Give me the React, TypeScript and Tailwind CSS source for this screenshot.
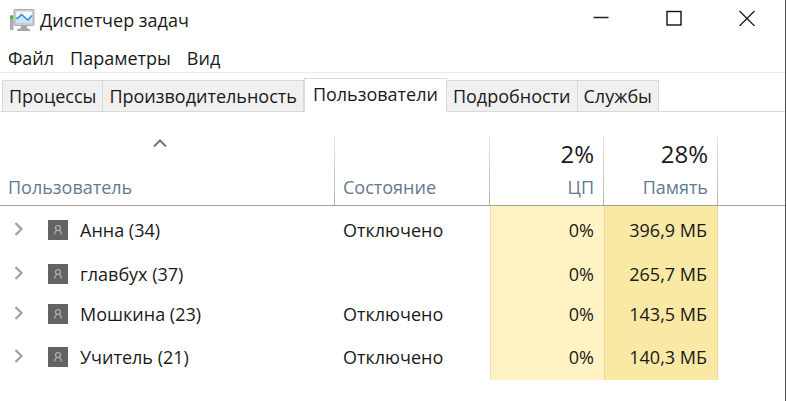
import { useState } from 'react'

type User = {
  name: string
  status: string
  cpu: string
  memory: string
  height: string
}

const menu = ['Файл', 'Параметры', 'Вид']

const tabs = ['Процессы', 'Производительность', 'Пользователи', 'Подробности', 'Службы']

const users: User[] = [
  { name: 'Анна (34)', status: 'Отключено', cpu: '0%', memory: '396,9 МБ', height: 'h-12' },
  { name: 'главбух (37)', status: '', cpu: '0%', memory: '265,7 МБ', height: 'h-10' },
  { name: 'Мошкина (23)', status: 'Отключено', cpu: '0%', memory: '143,5 МБ', height: 'h-10' },
  { name: 'Учитель (21)', status: 'Отключено', cpu: '0%', memory: '140,3 МБ', height: 'h-[46px]' },
]

// thin column divider that fades out towards the top
const divider =
  'bg-[linear-gradient(to_bottom,#e6e6e6,#b4b4b4)] bg-[length:1px_100%] bg-right bg-no-repeat'

function AppIcon() {
  return (
    <svg className="h-6 w-7 shrink-0" viewBox="0 0 28 24" aria-hidden="true">
      <rect x="2" y="7" width="3.500" height="15" fill="#a9adb0" />
      <rect x="2" y="8" width="3" height="3" fill="#2fc52f" />
      <path d="M13 17h6v3l3 1.500V23H9v-1.500l4-1.500z" fill="#a3a7ab" />
      <rect x="6" y="1.500" width="20" height="16" rx="1" fill="#c9cccf" stroke="#a9adb0" />
      <rect x="8" y="3.500" width="16" height="11.500" fill="#f1f9fe" />
      <path d="M8 11.500l2-.5 3.500-4 4 4 2.500 2 4-4v6H8z" fill="#c5e6fa" />
      <path
        d="M8 10.500l2-.5 3.500-3.500 4 3.500 2.500 2 4-4.500"
        fill="none"
        stroke="#3586cf"
        strokeWidth="1.500"
      />
    </svg>
  )
}

function UserIcon() {
  return (
    <svg className="h-5 w-5 shrink-0" viewBox="0 0 20 20" aria-hidden="true">
      <rect width="20" height="20" fill="#636363" />
      <circle cx="10" cy="8" r="2.500" fill="none" stroke="#b5b5b5" strokeWidth="1.200" />
      <path
        d="M6.500 14.500c0-2.500 1-3.500 2.500-4.300M13.500 14.500c0-2.500-1-3.500-2.500-4.300"
        fill="none"
        stroke="#b5b5b5"
        strokeWidth="1.200"
      />
    </svg>
  )
}

function WindowButtons() {
  return (
    <div className="flex pr-0.5">
      <button type="button" aria-label="Свернуть" className="flex h-9 w-[73px] items-center justify-center">
        <svg className="h-4 w-4" viewBox="0 0 16 16" fill="none" stroke="#222" strokeWidth="1.500">
          <path d="M0.500 7.500h15" />
        </svg>
      </button>
      <button type="button" aria-label="Развернуть" className="flex h-9 w-[73px] items-center justify-center">
        <svg className="h-4 w-4" viewBox="0 0 16 16" fill="none" stroke="#111" strokeWidth="1.400">
          <rect x="1" y="1.500" width="14" height="13.500" />
        </svg>
      </button>
      <button type="button" aria-label="Закрыть" className="flex h-9 w-[73px] items-center justify-center">
        <svg className="h-4 w-4" viewBox="0 0 16 16" fill="none" stroke="#222" strokeWidth="1.400">
          <path d="M0.500 1l15 15M15.500 1l-15 15" />
        </svg>
      </button>
    </div>
  )
}

export default function App() {
  const [activeTab, setActiveTab] = useState('Пользователи')

  return (
    <div className="min-h-screen border-r border-[#555] bg-white font-['Open_Sans','Noto_Sans',sans-serif] text-lg leading-6 text-[#1a1a1a]">
      {/* Title bar */}
      <header className="flex items-start justify-between">
        <div className="flex items-center gap-1 pt-2 pl-2">
          <AppIcon />
          <h1>Диспетчер задач</h1>
        </div>
        <WindowButtons />
      </header>

      {/* Menu */}
      <nav className="flex gap-4 border-b border-[#ececec] px-2 pt-2.5 pb-0.5">
        {menu.map((item) => (
          <button type="button" key={item}>
            {item}
          </button>
        ))}
      </nav>

      {/* Tabs */}
      <div role="tablist" className="flex h-[39px] items-end border-b border-[#d9d9d9] pl-0.5">
        {tabs.map((tab) => (
          <button
            type="button"
            role="tab"
            aria-selected={tab === activeTab}
            key={tab}
            onClick={() => setActiveTab(tab)}
            className={
              tab === activeTab
                ? '-mb-px h-[34px] border border-b-0 border-[#d9d9d9] bg-white px-2 pb-1'
                : 'h-[31px] border-t border-r border-[#d9d9d9] bg-[#f0f0f0] px-1.5 first:border-l'
            }
          >
            {tab}
          </button>
        ))}
      </div>

      {/* Users table */}
      <table className="mt-6 w-full table-fixed border-separate border-spacing-0">
        <colgroup>
          <col className="w-[335px]" />
          <col className="w-[155px]" />
          <col className="w-[114px]" />
          <col className="w-[114px]" />
          <col />
        </colgroup>
        <thead className="text-[#5f7a94]">
          <tr>
            <th aria-sort="ascending" className={`border-b border-[#a0a0a0] p-0 font-normal ${divider}`}>
              <button type="button" className="flex h-[69px] w-full flex-col items-start justify-between pb-1.5 pl-2">
                <svg className="mr-6 h-4 w-4 self-center" viewBox="0 0 16 16" fill="none" stroke="#5f7a94" strokeWidth="2">
                  <path d="M2 10.500l6-6 6 6" />
                </svg>
                Пользователь
              </button>
            </th>
            <th className={`border-b border-[#a0a0a0] p-0 font-normal ${divider}`}>
              <button type="button" className="flex h-[69px] w-full flex-col items-start justify-end pb-1.5 pl-2">
                Состояние
              </button>
            </th>
            <th className={`border-b border-[#a0a0a0] p-0 font-normal ${divider}`}>
              <button type="button" className="flex h-[69px] w-full flex-col items-end justify-between pr-2.5 pb-1.5">
                <span className="pt-1 text-2xl leading-7 text-[#1a1a1a]">2%</span>
                ЦП
              </button>
            </th>
            <th className={`border-b border-[#a0a0a0] p-0 font-normal ${divider}`}>
              <button type="button" className="flex h-[69px] w-full flex-col items-end justify-between pr-2.5 pb-1.5">
                <span className="pt-1 text-2xl leading-7 text-[#1a1a1a]">28%</span>
                Память
              </button>
            </th>
            <td className="border-b border-[#a0a0a0] p-0" />
          </tr>
        </thead>
        <tbody>
          {users.map((user) => (
            <tr key={user.name} className={user.height}>
              <td className="p-0">
                <div className="flex items-center pl-3">
                  <button type="button" aria-label={`Развернуть ${user.name}`}>
                    <svg className="h-4 w-4" viewBox="0 0 16 16" fill="none" stroke="#a0a0a0" strokeWidth="2.200">
                      <path d="M3.500 1l6 6-6 6" />
                    </svg>
                  </button>
                  <span className="flex items-center gap-3 pl-5">
                    <UserIcon />
                    {user.name}
                  </span>
                </div>
              </td>
              <td className="p-0 pl-2">{user.status}</td>
              <td className="border-l border-[#f6dcae] bg-[#fff3c4] p-0 pr-2.5 text-right">{user.cpu}</td>
              <td className="border-x border-[#f2d596] bg-[#f9e9a4] p-0 pr-2.5 text-right">{user.memory}</td>
              <td className="p-0" />
            </tr>
          ))}
        </tbody>
      </table>
    </div>
  )
}
